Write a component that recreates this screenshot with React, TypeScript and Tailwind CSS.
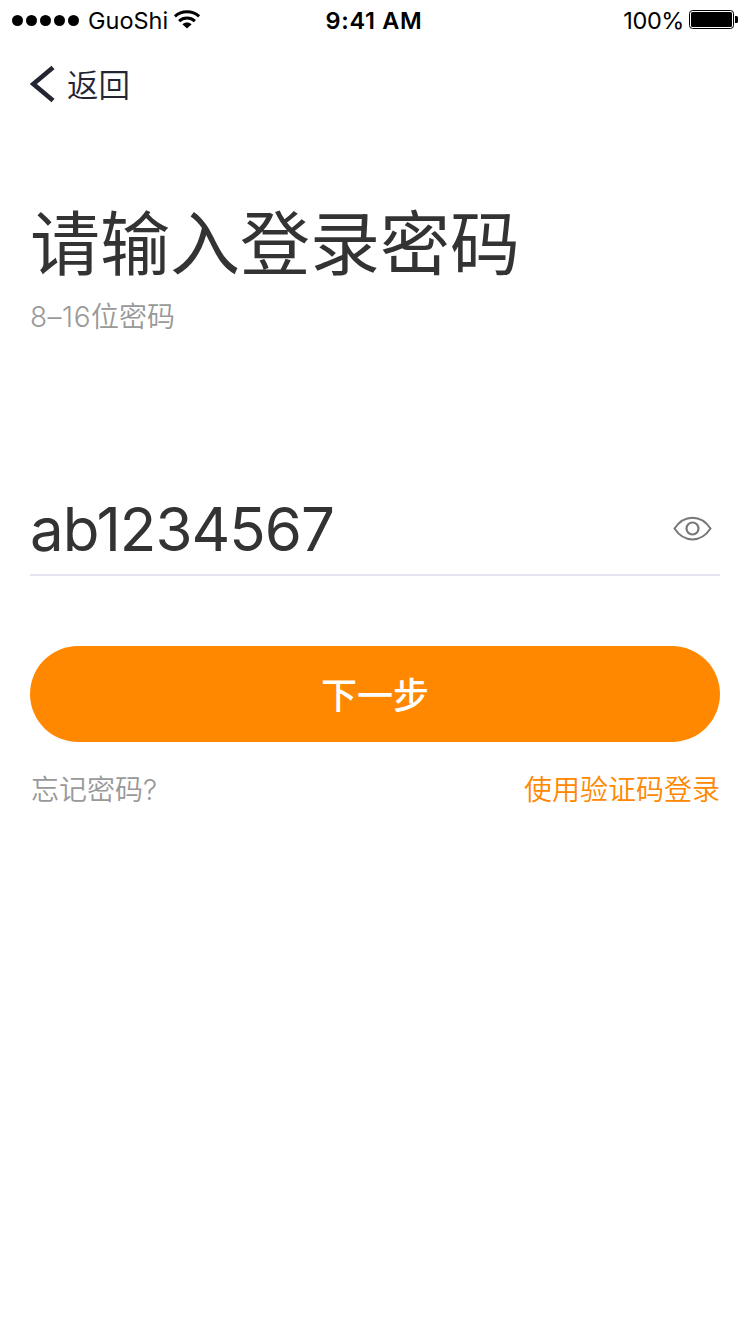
import React from "react";

const sans = "font-['Inter','Noto_Sans_CJK_SC',sans-serif]";

function StatusBar() {
  return (
    <header className="flex h-10 items-center justify-between pl-3 pr-3 text-[24px] leading-10 text-black">
      <div className="flex w-[240px] items-center">
        <div className="flex gap-[3px]">
          {[0, 1, 2, 3, 4].map((i) => (
            <span key={i} className="h-[11px] w-[11px] rounded-full bg-black" />
          ))}
        </div>
        <span className="ml-[9px] w-[85px] pt-0.5 text-[23.5px] leading-[38px] whitespace-nowrap">GuoShi</span>
        <svg width="28" height="20" viewBox="0 0 28 20" fill="none" stroke="#000" strokeWidth="3">
          <path d="M1.9 6.3C8.7 .2 19.3 .2 26.1 6.3" />
          <path d="M6.1 11.1c4.5-4.1 11.3-4.1 15.8 0" />
          <path d="M14 18.5l-4.6-4.3c2.5-2.3 6.7-2.3 9.2 0z" fill="#000" stroke="none" />
        </svg>
      </div>
      <span className="mr-[2px] pt-0.5 text-[23.5px] leading-[38px] font-semibold tracking-[0.7px] whitespace-nowrap">9:41 AM</span>
      <div className="flex w-[240px] items-center justify-end">
        <span className="mr-[5px] pt-0.5 text-[23.5px] leading-[38px] tracking-[-0.4px]">100%</span>
        <svg width="49" height="20" viewBox="0 0 49 20">
          <rect x=".5" y=".5" width="44" height="18" rx="3" fill="none" stroke="#000" />
          <rect x="2" y="2" width="41" height="15" rx="1.5" />
          <path d="M46 6h1.5q1.5 0 1.5 1.5v4q0 1.5-1.5 1.5H46z" />
        </svg>
      </div>
    </header>
  );
}

export default function App() {
  return (
    <div className={`flex h-[1334px] w-[750px] flex-col bg-white ${sans}`}>
      <StatusBar />
      <nav className="flex h-[88px] items-center px-[30px] text-[#242533]">
        <svg width="25" height="38" viewBox="0 0 25 38" fill="none" stroke="currentColor" strokeWidth="4.6">
          <path d="M23 2.5L3.3 19l19.7 16.5" />
        </svg>
        <button className="ml-3 pt-1 text-[31.5px] leading-[44px] font-[350]">返回</button>
      </nav>
      <main className="flex flex-col px-[30px]">
        <h1 className="mt-[68px] text-[70px] leading-[98px] font-normal text-[#333]">请输入登录密码</h1>
        <p className="mt-[3px] text-[28px] leading-[40px] font-[350] text-[#999]">
          <span className="inline-block w-[61px] tracking-[0.5px]">8–16</span>位密码
        </p>
        <div className="mt-[147px] flex h-[92px] items-center justify-between border-b-2 border-[#e4e5f0] pr-2">
          <span className="text-[60px] leading-[84px] font-normal tracking-[-1px] text-[#333]">ab1234567</span>
          <svg width="39" height="26" viewBox="0 0 39 26" fill="none" stroke="#777" strokeWidth="2">
            <path d="M1.5 12.5C11-2 28-2 37.5 12.5C28 27 11 27 1.5 12.5z" />
            <circle cx="19.5" cy="12.5" r="6" strokeWidth="2.2" />
          </svg>
        </div>
        <button className="mt-[70px] h-24 rounded-full bg-[#ff8800] pt-1 text-[36px] leading-[50px] font-medium text-white">
          下一步
        </button>
        <div className="mt-[28px] flex justify-between text-[28px] leading-[40px]">
          <a className="pl-px font-[350] text-[#999]">忘记密码?</a>
          <a className="font-[350] text-[#ff8800]">使用验证码登录</a>
        </div>
      </main>
    </div>
  );
}
